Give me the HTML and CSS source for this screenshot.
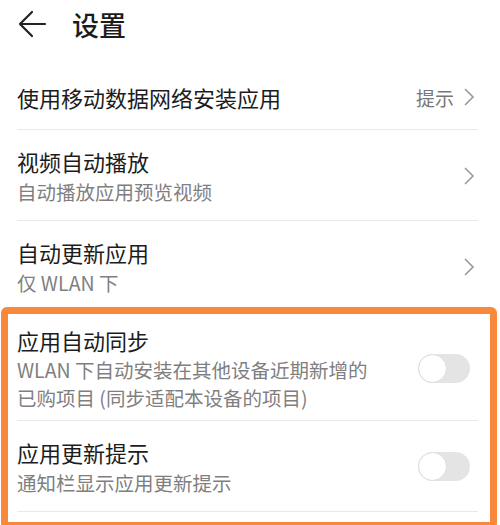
FILE: index.html
```html
<!DOCTYPE html>
<html lang="zh">
<head>
  <meta charset="UTF-8">
  <title>设置</title>
  <link rel="stylesheet" href="styles.css">
</head>
<body>
  <div class="screen">
    <div class="header">
      <svg class="back" width="30" height="30" viewBox="0 0 30 30">
        <path d="M28 15 H3 M15 3 L3 15 L15 27" fill="none" stroke="#222" stroke-width="2.2" stroke-linecap="round" stroke-linejoin="round"/>
      </svg>
      <div class="title">设置</div>
    </div>

    <div class="list">
      <div class="row single">
        <div class="text">
          <div class="name">使用移动数据网络安装应用</div>
        </div>
        <span class="value">提示</span>
        <svg class="chev" width="12" height="20" viewBox="0 0 12 20"><path d="M2 2 L10 10 L2 18" fill="none" stroke="#999" stroke-width="1.6"/></svg>
      </div>

      <div class="row">
        <div class="text">
          <div class="name">视频自动播放</div>
          <div class="desc">自动播放应用预览视频</div>
        </div>
        <svg class="chev" width="12" height="20" viewBox="0 0 12 20"><path d="M2 2 L10 10 L2 18" fill="none" stroke="#999" stroke-width="1.6"/></svg>
      </div>

      <div class="row">
        <div class="text">
          <div class="name">自动更新应用</div>
          <div class="desc">仅 WLAN 下</div>
        </div>
        <svg class="chev" width="12" height="20" viewBox="0 0 12 20"><path d="M2 2 L10 10 L2 18" fill="none" stroke="#999" stroke-width="1.6"/></svg>
      </div>

      <div class="row tall">
        <div class="text">
          <div class="name">应用自动同步</div>
          <div class="desc">WLAN 下自动安装在其他设备近期新增的<br>已购项目 (同步适配本设备的项目)</div>
        </div>
        <div class="switch"><div class="knob"></div></div>
      </div>

      <div class="row">
        <div class="text">
          <div class="name">应用更新提示</div>
          <div class="desc">通知栏显示应用更新提示</div>
        </div>
        <div class="switch"><div class="knob"></div></div>
      </div>
    </div>

    <!-- 강조 표시 박스 -->
    <div class="highlight"></div>
  </div>
</body>
</html>
```

FILE: styles.css
```css
body {
  margin: 0;
  background: #fff;
  font-family: "Noto Sans CJK SC", "Noto Sans", sans-serif;
  color: #1c1c1c;
}

.screen {
  position: relative;
  width: 500px;
  height: 525px;
  overflow: hidden;
}

.header {
  display: flex;
  align-items: center;
  height: 48px;
  padding-left: 17px;
}

.back {
  margin-right: 25px;
}

.title {
  font-size: 27px;
  font-weight: 500;
  line-height: 1;
}

.list {
  margin-top: 17px;
  padding: 0 22px 0 17px;
}

.row {
  display: flex;
  align-items: center;
  border-bottom: 1px solid #e9e9e9;
  padding: 16px 0 15px;
}

.row.single {
  height: 65px;
  box-sizing: border-box;
  padding: 0;
}

.row.tall {
  padding: 13px 0 8px;
}

.row.tall .desc {
  line-height: 28px;
  margin-top: 1px;
}

.text {
  flex: 1;
}

.name {
  font-size: 22px;
  line-height: 30px;
}

.desc {
  font-size: 19.5px;
  line-height: 26px;
  margin-top: 3px;
  color: #7f7f7f;
}

.value {
  font-size: 19px;
  color: #777;
  margin-right: 9px;
}

.chev {
  margin-right: 3px;
}

.switch {
  width: 52px;
  height: 29px;
  border-radius: 15px;
  background: #e4e4e4;
  margin-right: 8px;
  position: relative;
}

.knob {
  position: absolute;
  left: 0;
  top: 0;
  width: 29px;
  height: 29px;
  box-sizing: border-box;
  border-radius: 50%;
  background: #fff;
  border: 1.5px solid #dcdcdc;
}

.highlight {
  position: absolute;
  left: 1px;
  top: 307px;
  width: 496px;
  height: 222px;
  box-sizing: border-box;
  border: 7px solid #f8893a;
  border-radius: 6px;
}
```
